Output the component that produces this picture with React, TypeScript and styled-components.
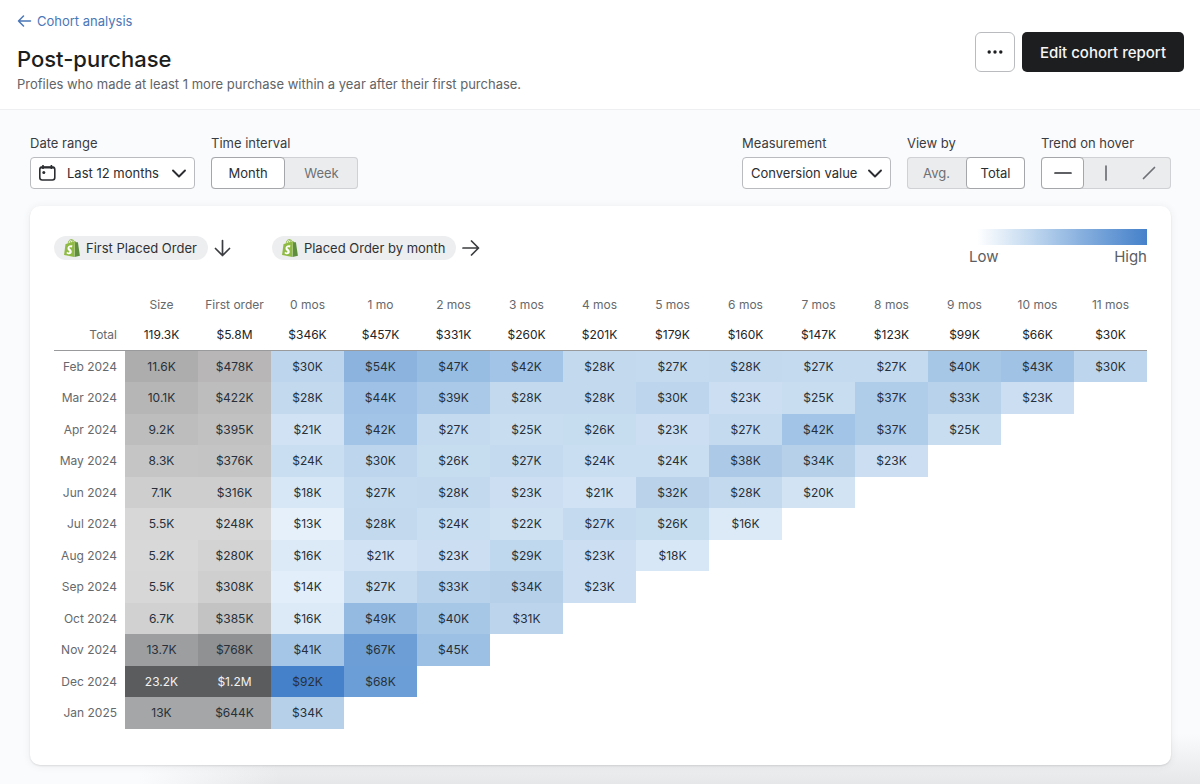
import React from "react";
import styled, { createGlobalStyle } from "styled-components";

const GlobalStyle = createGlobalStyle`
  *, *::before, *::after { box-sizing: border-box; }
  html { height: 100%; background: #fafbfd; }
  body {
    margin: 0;
    min-height: 100%;
    font-family: Inter, "Liberation Sans", sans-serif;
    font-size: 14px;
    color: #2b2d30;
  }
  button, select { font: inherit; color: inherit; }
`;

const Page = styled.div`
  display: flex;
  flex-direction: column;
  min-height: 100vh;
`;

const Header = styled.header`
  display: flex;
  justify-content: space-between;
  align-items: flex-start;
  padding: 12px 16px 17px 17px;
  background: #fff;
  border-bottom: 1px solid #eeeff1;
`;

const BackLink = styled.a`
  display: inline-flex;
  align-items: center;
  gap: 4px;
  font-size: 13px;
  line-height: 18px;
  color: #4a77b8;
  text-decoration: none;
`;

const Title = styled.h1`
  margin: 14px 0 4px;
  font-size: 22px;
  line-height: 26px;
  font-weight: 500;
  color: #1d1e20;
`;

const Subtitle = styled.p`
  margin: 0;
  font-size: 13px;
  line-height: 16px;
  color: #616467;
`;

const Actions = styled.div`
  display: flex;
  gap: 7px;
  padding-top: 20px;
`;

const MoreButton = styled.button`
  display: grid;
  place-items: center;
  width: 40px;
  height: 40px;
  padding: 0;
  background: #fff;
  border: 1px solid #b9bbbe;
  border-radius: 6px;
`;

const PrimaryButton = styled.button`
  height: 40px;
  padding: 0 18px;
  font-size: 15px;
  font-weight: 500;
  color: #f6f6f6;
  background: #1d1e20;
  border: 0;
  border-radius: 5px;
`;

const Main = styled.main`
  flex: 1;
  padding: 24px 29px 19px 30px;
  background:
    linear-gradient(to right, #fafbfd 140px, rgba(250, 251, 253, 0) 280px),
    linear-gradient(to top, #e6e7e9, #fafbfd 50px);
`;

const Toolbar = styled.div`
  display: flex;
  justify-content: space-between;
  margin-bottom: 17px;
`;

const ToolbarGroup = styled.div`
  display: flex;
  gap: 16px;
`;

const Field = styled.div`
  display: flex;
  flex-direction: column;
  gap: 5px;
`;

const fieldLabel = `
  font-size: 13px;
  line-height: 18px;
  color: #3a3c3f;
`;

const Label = styled.label`${fieldLabel}`;
const LabelText = styled.span`${fieldLabel}`;

const SelectBox = styled.div`
  position: relative;
  color: #2b2d30;
`;

const Select = styled.select<{ $icon?: boolean }>`
  appearance: none;
  display: block;
  height: 32px;
  padding: ${(p) => (p.$icon ? "0 35px 0 36px" : "0 32px 0 8px")};
  font-size: 13px;
  background: #fff;
  border: 1px solid #b9bbbe;
  border-radius: 4px;
`;

const SelectIcon = styled.span<{ $side: "left" | "right" }>`
  position: absolute;
  top: 8px;
  ${(p) => p.$side}: 8px;
  display: flex;
  pointer-events: none;
`;

const Segments = styled.div`
  display: flex;
  height: 32px;
  background: #ebecee;
  border-radius: 4px;
  box-shadow: inset 0 0 0 1px #cfd1d4;
`;

const Segment = styled.button<{ $active?: boolean; $width: number }>`
  display: grid;
  place-items: center;
  width: ${(p) => p.$width}px;
  padding: 0;
  font-size: 13px;
  color: ${(p) => (p.$active ? "#2b2d30" : "#6d7074")};
  background: ${(p) => (p.$active ? "#fff" : "transparent")};
  border: 1px solid ${(p) => (p.$active ? "#a4a6a9" : "transparent")};
  border-radius: 4px;
`;

const Card = styled.section`
  padding: 23px 24px 36px;
  background: #fff;
  border-radius: 10px;
  box-shadow: 0 1px 2px rgba(0, 0, 0, 0.1), 0 1px 8px rgba(40, 50, 50, 0.07);
`;

const CardTop = styled.div`
  display: flex;
  justify-content: space-between;
  align-items: flex-start;
  height: 60px;
`;

const Metrics = styled.div`
  display: flex;
  gap: 40px;
  padding-top: 7px;
`;

const Metric = styled.div`
  display: flex;
  align-items: center;
  gap: 6px;
  color: #3a3c3f;
`;

const Pill = styled.span`
  display: flex;
  align-items: center;
  gap: 5px;
  height: 24px;
  padding: 0 11px 0 9px;
  font-size: 13px;
  color: #2f3134;
  background: #edeeef;
  border-radius: 12px;
`;

const Legend = styled.div`
  width: 178px;
  font-size: 15px;
  color: #5b5e62;
`;

const LegendBar = styled.div`
  height: 16px;
  background: linear-gradient(to right, #fff 8px, #c4daf0 60px, #7faadc 120px, #4581ca);
`;

const LegendEnds = styled.div`
  display: flex;
  justify-content: space-between;
  line-height: 24px;
`;

const Table = styled.table`
  width: 100%;
  table-layout: fixed;
  border-collapse: separate;
  border-spacing: 0;
  font-size: 12px;
  line-height: 16px;
  text-align: center;

  thead tr { height: 31px; }
  tbody tr:nth-child(odd) { height: 31px; }
  tbody tr:nth-child(even) { height: 32px; }
  thead tr:last-child > * { border-bottom: 1px solid #989a9c; }
`;

const ColumnHead = styled.th<{ $width?: number }>`
  width: ${(p) => (p.$width ? `${p.$width}px` : "auto")};
  padding: 0;
  font-size: 12px;
  font-weight: 400;
  color: #66696c;
`;

const RowHead = styled.th`
  padding: 0 8px 0 0;
  font-weight: 400;
  text-align: right;
  white-space: nowrap;
  color: #66696c;
`;

const TotalCell = styled.td`
  padding: 0;
  font-size: 12px;
  color: #222427;
`;

const Cell = styled.td<{ $fill?: string; $light?: boolean }>`
  padding: 0;
  font-size: 12px;
  color: ${(p) => (p.$light ? "#f2f2f2" : "#27303a")};
  background: ${(p) => p.$fill ?? "transparent"};
`;

type Stop = [number, number, number, number];

const BLUES: Stop[] = [
  [13, 229, 240, 250],
  [16, 220, 234, 247],
  [21, 208, 226, 243],
  [28, 194, 217, 238],
  [34, 182, 208, 234],
  [42, 162, 196, 230],
  [54, 139, 179, 222],
  [67, 109, 159, 214],
  [92, 68, 129, 202],
];

const SIZE_GREYS: Stop[] = [
  [5, 217, 217, 217],
  [7, 207, 207, 207],
  [10, 183, 183, 183],
  [12, 171, 171, 171],
  [13, 165, 166, 167],
  [14, 153, 155, 156],
  [23, 91, 92, 94],
];

const ORDER_GREYS: Stop[] = [
  [248, 215, 215, 215],
  [316, 206, 206, 206],
  [395, 193, 193, 193],
  [478, 184, 182, 183],
  [644, 165, 166, 167],
  [768, 143, 145, 146],
  [1200, 91, 92, 94],
];

function shade(stops: Stop[], value: number): string {
  const last = stops[stops.length - 1];
  if (value >= last[0]) return `rgb(${last.slice(1).join(",")})`;
  const i = Math.max(1, stops.findIndex((s) => s[0] > value));
  const [a, b] = [stops[i - 1], stops[i]];
  const t = Math.max(0, (value - a[0]) / (b[0] - a[0]));
  const mix = [1, 2, 3].map((c) => Math.round(a[c] + (b[c] - a[c]) * t));
  return `rgb(${mix.join(",")})`;
}

const COLUMNS = [
  "Size", "First order", "0 mos", "1 mo", "2 mos", "3 mos", "4 mos", "5 mos",
  "6 mos", "7 mos", "8 mos", "9 mos", "10 mos", "11 mos",
];

const TOTALS = [
  "119.3K", "$5.8M", "$346K", "$457K", "$331K", "$260K", "$201K", "$179K",
  "$160K", "$147K", "$123K", "$99K", "$66K", "$30K",
];

const COHORTS: { month: string; size: number; order: number; values: number[] }[] = [
  { month: "Feb 2024", size: 11.6, order: 478, values: [30, 54, 47, 42, 28, 27, 28, 27, 27, 40, 43, 30] },
  { month: "Mar 2024", size: 10.1, order: 422, values: [28, 44, 39, 28, 28, 30, 23, 25, 37, 33, 23] },
  { month: "Apr 2024", size: 9.2, order: 395, values: [21, 42, 27, 25, 26, 23, 27, 42, 37, 25] },
  { month: "May 2024", size: 8.3, order: 376, values: [24, 30, 26, 27, 24, 24, 38, 34, 23] },
  { month: "Jun 2024", size: 7.1, order: 316, values: [18, 27, 28, 23, 21, 32, 28, 20] },
  { month: "Jul 2024", size: 5.5, order: 248, values: [13, 28, 24, 22, 27, 26, 16] },
  { month: "Aug 2024", size: 5.2, order: 280, values: [16, 21, 23, 29, 23, 18] },
  { month: "Sep 2024", size: 5.5, order: 308, values: [14, 27, 33, 34, 23] },
  { month: "Oct 2024", size: 6.7, order: 385, values: [16, 49, 40, 31] },
  { month: "Nov 2024", size: 13.7, order: 768, values: [41, 67, 45] },
  { month: "Dec 2024", size: 23.2, order: 1200, values: [92, 68] },
  { month: "Jan 2025", size: 13, order: 644, values: [34] },
];

const formatOrder = (v: number) => (v >= 1000 ? `$${v / 1000}M` : `$${v}K`);

function LineIcon({ d, width, height, stroke = 1.7 }: { d: string; width: number; height: number; stroke?: number }) {
  return (
    <svg width={width} height={height} viewBox={`0 0 ${width} ${height}`} fill="none" stroke="currentColor"
      strokeWidth={stroke} strokeLinecap="round" strokeLinejoin="round" aria-hidden="true">
      <path d={d} />
    </svg>
  );
}

const Chevron = () => (
  <SelectIcon $side="right">
    <LineIcon width={16} height={16} stroke={1.9} d="M2 5.5l6 6 6-6" />
  </SelectIcon>
);

const CalendarIcon = () => (
  <svg width="18" height="16" viewBox="0 0 18 16" fill="none" stroke="currentColor" strokeWidth="1.6" aria-hidden="true">
    <rect x="1.8" y="2" width="15" height="13" rx="2.4" />
    <path d="M2.4 2.6h13.8" strokeWidth="1.8" />
    <path d="M5 0v4M13.4 0v4" />
    <circle cx="5.8" cy="7.4" r="1.5" fill="currentColor" stroke="none" />
  </svg>
);

const ShopifyIcon = () => (
  <svg width="18" height="18" viewBox="0 0 24 24" aria-hidden="true">
    <path fill="#fff" d="M4 8h11v14H4z" />
    <path fill="#5e8e3e" d="M15.337 23.979l7.216-1.561s-2.604-17.613-2.625-17.73c-.018-.116-.114-.192-.211-.192s-1.929-.136-1.929-.136-1.275-1.274-1.439-1.411c-.045-.037-.075-.057-.121-.074l-.914 21.104h.023z" />
    <path fill="#8fba43" fillRule="evenodd" d="M11.71 11.305s-.81-.424-1.774-.424c-1.447 0-1.504.906-1.504 1.141 0 1.232 3.24 1.715 3.24 4.629 0 2.295-1.44 3.76-3.406 3.76-2.354 0-3.54-1.465-3.54-1.465l.646-2.086s1.245 1.066 2.28 1.066c.675 0 .975-.545.975-.932 0-1.619-2.654-1.694-2.654-4.359-.034-2.237 1.571-4.416 4.827-4.416 1.257 0 1.875.361 1.875.361l-.945 2.715-.02.01zM11.17.83c.136 0 .271.038.405.135-.984.465-2.064 1.639-2.508 3.992-.656.213-1.293.405-1.889.578C7.697 3.75 8.951.84 11.17.84V.83zm1.235 2.949v.135c-.754.232-1.583.484-2.394.736.466-1.777 1.333-2.645 2.085-2.971.193.501.309 1.176.309 2.1zm.539-2.234c.694.074 1.141.867 1.429 1.755-.349.114-.735.231-1.158.366v-.252c0-.752-.096-1.371-.271-1.871v.002zm2.992 1.289c-.02 0-.06.021-.078.021s-.289.075-.714.21c-.423-1.233-1.176-2.37-2.508-2.37h-.115C12.135.209 11.669 0 11.265 0 8.159 0 6.675 3.877 6.21 5.846c-1.194.365-2.063.636-2.16.674-.675.213-.694.232-.772.87-.075.462-1.83 14.063-1.83 14.063L15.009 24l.927-21.166z" />
  </svg>
);

export default function App() {
  return (
    <Page>
      <GlobalStyle />
      <Header>
        <div>
          <BackLink href="#cohorts">
            <LineIcon width={16} height={16} stroke={1.5} d="M13.5 8H1.5M6.5 3L1.5 8l5 5" />
            Cohort analysis
          </BackLink>
          <Title>Post-purchase</Title>
          <Subtitle>Profiles who made at least 1 more purchase within a year after their first purchase.</Subtitle>
        </div>
        <Actions>
          <MoreButton type="button" aria-label="More options">
            <svg width="16" height="4" viewBox="0 0 16 4" fill="#1d1e20" aria-hidden="true">
              <circle cx="2.2" cy="2" r="1.7" />
              <circle cx="8" cy="2" r="1.7" />
              <circle cx="13.8" cy="2" r="1.7" />
            </svg>
          </MoreButton>
          <PrimaryButton type="button">Edit cohort report</PrimaryButton>
        </Actions>
      </Header>

      <Main>
        <Toolbar>
          <ToolbarGroup>
            <Field>
              <Label htmlFor="range">Date range</Label>
              <SelectBox>
                <SelectIcon $side="left"><CalendarIcon /></SelectIcon>
                <Select id="range" $icon defaultValue="12">
                  <option value="12">Last 12 months</option>
                </Select>
                <Chevron />
              </SelectBox>
            </Field>
            <Field role="group" aria-labelledby="interval">
              <LabelText id="interval">Time interval</LabelText>
              <Segments>
                <Segment type="button" $active $width={74} aria-pressed="true">Month</Segment>
                <Segment type="button" $width={73} aria-pressed="false">Week</Segment>
              </Segments>
            </Field>
          </ToolbarGroup>
          <ToolbarGroup>
            <Field>
              <Label htmlFor="measure">Measurement</Label>
              <SelectBox>
                <Select id="measure" defaultValue="value">
                  <option value="value">Conversion value</option>
                </Select>
                <Chevron />
              </SelectBox>
            </Field>
            <Field role="group" aria-labelledby="view">
              <LabelText id="view">View by</LabelText>
              <Segments>
                <Segment type="button" $width={59} aria-pressed="false">Avg.</Segment>
                <Segment type="button" $active $width={59} aria-pressed="true">Total</Segment>
              </Segments>
            </Field>
            <Field role="group" aria-labelledby="trend">
              <LabelText id="trend">Trend on hover</LabelText>
              <Segments>
                <Segment type="button" $active $width={43} aria-pressed="true" aria-label="Horizontal">
                  <LineIcon width={18} height={16} d="M1 8h16" />
                </Segment>
                <Segment type="button" $width={43} aria-pressed="false" aria-label="Vertical">
                  <LineIcon width={16} height={16} d="M8 1v14" />
                </Segment>
                <Segment type="button" $width={44} aria-pressed="false" aria-label="Diagonal">
                  <LineIcon width={16} height={16} d="M2.5 13.5L13.5 2.5" />
                </Segment>
              </Segments>
            </Field>
          </ToolbarGroup>
        </Toolbar>

        <Card>
          <CardTop>
            <Metrics>
              <Metric>
                <Pill><ShopifyIcon />First Placed Order</Pill>
                <LineIcon width={18} height={18} d="M8.5 1.5v15M1.5 9.5l7 7 7-7" />
              </Metric>
              <Metric>
                <Pill><ShopifyIcon />Placed Order by month</Pill>
                <LineIcon width={18} height={18} d="M1 9h15.5M9.5 2l7 7-7 7" />
              </Metric>
            </Metrics>
            <Legend>
              <LegendBar />
              <LegendEnds><span>Low</span><span>High</span></LegendEnds>
            </Legend>
          </CardTop>
          <Table>
            <thead>
              <tr>
                <ColumnHead $width={71} aria-label="Cohort" />
                {COLUMNS.map((name) => <ColumnHead key={name} scope="col">{name}</ColumnHead>)}
              </tr>
              <tr>
                <RowHead scope="row">Total</RowHead>
                {TOTALS.map((total, i) => <TotalCell key={i}>{total}</TotalCell>)}
              </tr>
            </thead>
            <tbody>
              {COHORTS.map(({ month, size, order, values }) => (
                <tr key={month}>
                  <RowHead scope="row">{month}</RowHead>
                  <Cell $fill={shade(SIZE_GREYS, size)} $light={size > 20}>{size}K</Cell>
                  <Cell $fill={shade(ORDER_GREYS, order)} $light={order > 1000}>{formatOrder(order)}</Cell>
                  {values.map((value, i) => (
                    <Cell key={i} $fill={shade(BLUES, value)}>${value}K</Cell>
                  ))}
                </tr>
              ))}
            </tbody>
          </Table>
        </Card>
      </Main>
    </Page>
  );
}
